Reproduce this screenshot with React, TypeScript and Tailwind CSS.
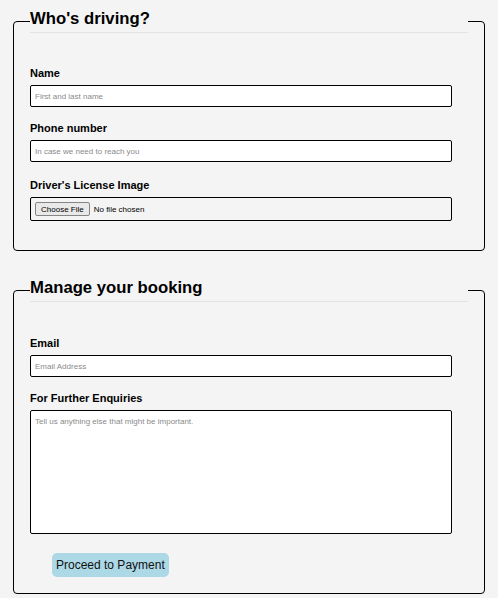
import type { ReactNode } from "react";

const inputCls =
  "block h-[22px] w-[422px] rounded-[2px] border border-black bg-white px-[4px] text-[8px] text-black outline-none placeholder:text-[#8a8a8a]";

function Field({ label, gap, children }: { label: string; gap?: string; children: ReactNode }) {
  return (
    <div className={gap ?? ""}>
      <label className="mb-[5px] block text-[11px] font-bold leading-[13px] text-black">{label}</label>
      {children}
    </div>
  );
}

function Section({ title, className, children }: { title: string; className?: string; children: ReactNode }) {
  return (
    <fieldset className={"mx-[13px] rounded-[4px] border border-black px-4 " + (className ?? "")}>
      <legend className="w-full">
        <h2 className="border-b border-[#e3e3e3] pb-[3px] text-[16.7px] font-bold leading-[20px] text-black">
          {title}
        </h2>
      </legend>
      {children}
    </fieldset>
  );
}

export default function App() {
  return (
    <div className="min-h-screen bg-[#f4f4f4] pt-[9px] font-['Liberation_Sans',Arial,sans-serif]">
      <form onSubmit={(e) => e.preventDefault()}>
        <Section title="Who's driving?" className="pb-[29px]">
          <div className="pt-[34px]">
            <Field label="Name">
              <input type="text" placeholder="First and last name" className={inputCls} />
            </Field>
            <Field label="Phone number" gap="mt-[15px]">
              <input type="tel" placeholder="In case we need to reach you" className={inputCls} />
            </Field>
            <Field label="Driver's License Image" gap="mt-[17px]">
              <input
                type="file"
                className="block h-[24px] w-[422px] rounded-[2px] border border-black px-[4px] py-[4px] text-[8px] leading-[14px] text-black file:mr-[4px] file:h-[14px] file:rounded-[2px] file:border file:border-[#858585] file:bg-[#e9e9e9] file:px-[5px] file:text-[8px] file:text-black"
              />
            </Field>
          </div>
        </Section>

        <Section title="Manage your booking" className="mt-[27px] pb-[16px]">
          <div className="pt-[35px]">
            <Field label="Email">
              <input type="email" placeholder="Email Address" className={inputCls} />
            </Field>
            <Field label="For Further Enquiries" gap="mt-[15px]">
              <textarea
                placeholder="Tell us anything else that might be important."
                className="block h-[124px] w-[422px] resize-none rounded-[2px] border border-black bg-white px-[4px] py-[5px] text-[8px] text-black outline-none placeholder:text-[#8a8a8a]"
              />
            </Field>
            <button
              type="submit"
              className="ml-[22px] mt-[19px] h-[24px] rounded-[5px] bg-[#add8e6] px-[4px] text-[12px] text-[#111]"
            >
              Proceed to Payment
            </button>
          </div>
        </Section>
      </form>
    </div>
  );
}
